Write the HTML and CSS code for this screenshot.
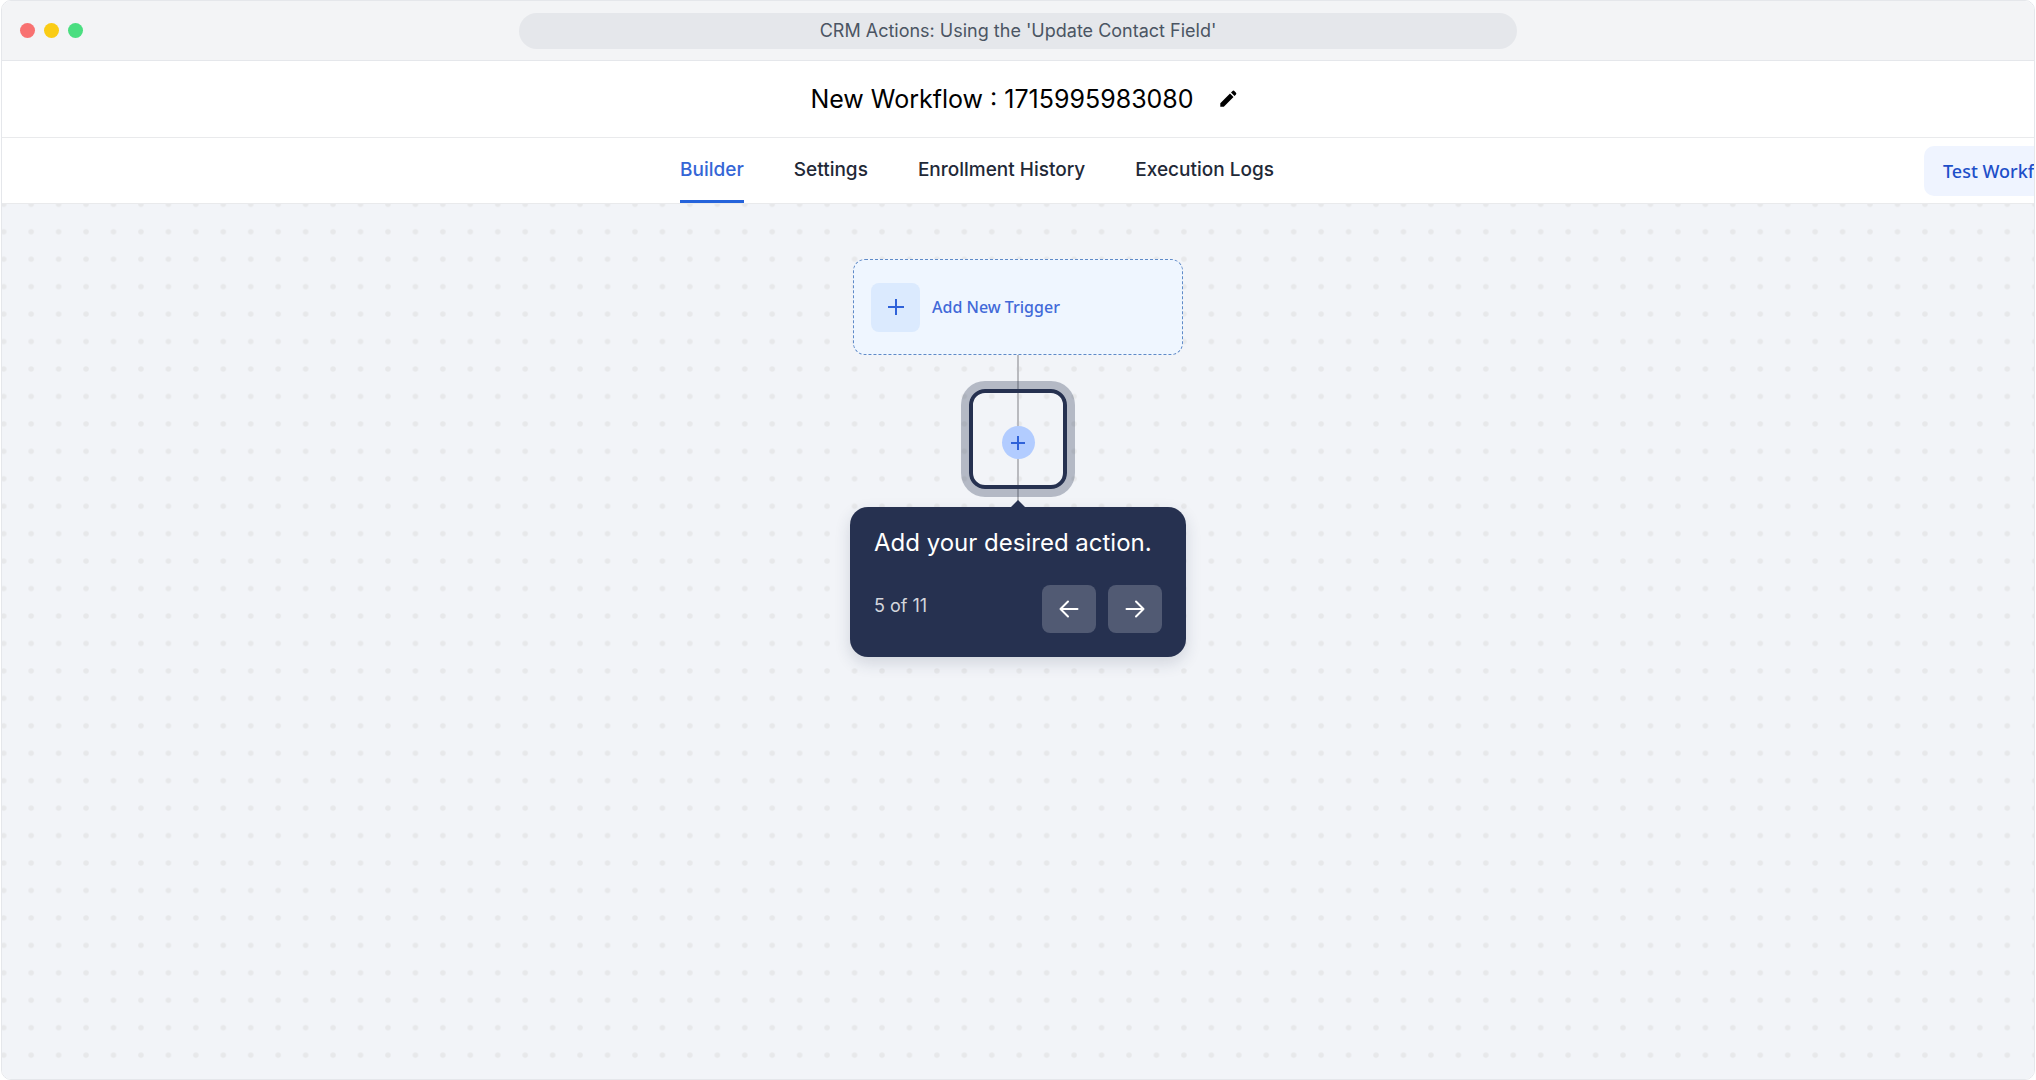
FILE: index.html
```html
<!DOCTYPE html>
<html lang="en">
<head>
  <meta charset="UTF-8">
  <title>CRM Actions: Using the 'Update Contact Field'</title>
  <link rel="stylesheet" href="styles.css">
</head>
<body>
  <div class="window">
    <div class="titlebar">
      <div class="lights">
        <span class="light red"></span>
        <span class="light yellow"></span>
        <span class="light green"></span>
      </div>
      <div class="address">CRM Actions: Using the 'Update Contact Field'</div>
    </div>

    <header class="header">
      <h1>New Workflow : 1715995983080</h1>
      <button class="edit" aria-label="Edit name">
        <svg width="24" height="24" viewBox="0 0 24 24"><path d="M4.3 16.2 14 6.5l3.5 3.5-9.7 9.7H4.3zM15 5.5l1.3-1.3a1.6 1.6 0 0 1 2.3 0l1.2 1.2a1.6 1.6 0 0 1 0 2.3L18.5 9z"/></svg>
      </button>
    </header>

    <div class="toolbar">
      <nav class="tabs">
        <a href="#" class="active">Builder</a>
        <a href="#">Settings</a>
        <a href="#">Enrollment History</a>
        <a href="#">Execution Logs</a>
      </nav>
      <button class="test">Test Workflow</button>
    </div>

    <main class="canvas">
      <svg class="dots" width="100%" height="100%">
        <pattern id="grid" width="20" height="20" patternUnits="userSpaceOnUse" patternTransform="translate(-12 -13.4) scale(1.3723)">
          <circle cx="10" cy="10" r="2" fill="#e7e8ea"/>
        </pattern>
        <rect width="100%" height="100%" fill="url(#grid)"/>
      </svg>

      <div class="flow">
        <button class="trigger">
          <span class="trigger-icon">
            <svg width="18" height="18" viewBox="0 0 18 18"><path d="M9 1v16M1 9h16" stroke="#2f62d9" stroke-width="2"/></svg>
          </span>
          Add New Trigger
        </button>

        <div class="step">
          <div class="spotlight">
            <button class="add" aria-label="Add action">
              <svg width="16" height="16" viewBox="0 0 16 16"><path d="M8 1v14M1 8h14" stroke="#2f62d9" stroke-width="2"/></svg>
            </button>
          </div>
        </div>

        <div class="tooltip">
          <p>Add your desired action.</p>
          <div class="tooltip-footer">
            <span class="count">5 of 11</span>
            <button aria-label="Previous">
              <svg width="24" height="24" viewBox="0 0 24 24"><path d="M20.5 12h-17M11 4.5 3.5 12l7.5 7.5"/></svg>
            </button>
            <button aria-label="Next">
              <svg width="24" height="24" viewBox="0 0 24 24"><path d="M3.5 12h17M13 4.5l7.5 7.5-7.5 7.5"/></svg>
            </button>
          </div>
        </div>
      </div>
    </main>
  </div>
</body>
</html>
```
FILE: styles.css
```css
* {
  box-sizing: border-box;
}
body {
  margin: 0;
  background: #fff;
  font-family: Inter, "Liberation Sans", sans-serif;
}
button {
  border: none;
  padding: 0;
  background: none;
  font: inherit;
  cursor: pointer;
}
svg {
  display: block;
}
.window {
  display: flex;
  flex-direction: column;
  height: 100vh;
  margin: 0 1px;
  border: 1px solid #e5e7eb;
  border-radius: 10px;
  overflow: hidden;
}

.titlebar {
  display: grid;
  grid-template-columns: 1fr 2fr 1fr;
  align-items: center;
  height: 60px;
  padding: 0 18px;
  background: #f3f4f6;
  border-bottom: 1px solid #e5e7eb;
}
.lights {
  display: flex;
  gap: 9px;
}
.light {
  width: 15px;
  height: 15px;
  border-radius: 50%;
}
.red { background: #f87171; }
.yellow { background: #facc15; }
.green { background: #4ade80; }
.address {
  height: 36px;
  border-radius: 18px;
  background: #e5e7eb;
  color: #4b5563;
  font-size: 18px;
  line-height: 36px;
  text-align: center;
}

.header {
  display: flex;
  justify-content: center;
  align-items: center;
  gap: 22px;
  height: 77px;
  padding-left: 14px;
  border-bottom: 1px solid #e9eaec;
}
.header h1 {
  margin: 0;
  font-size: 25px;
  font-weight: 400;
  color: #000;
}

.toolbar {
  position: relative;
  display: flex;
  justify-content: center;
  height: 66px;
  padding-right: 82px;
  border-bottom: 1px solid #e9eaec;
}
.tabs {
  display: flex;
  gap: 50px;
}
.tabs a {
  height: 65px;
  color: #1f2937;
  font-size: 19px;
  font-weight: 500;
  line-height: 64px;
  text-decoration: none;
}
.tabs .active {
  color: #3566d6;
  border-bottom: 3px solid #2563db;
}
/* runs past the right edge of the window */
.test {
  position: absolute;
  top: 8px;
  right: -56px;
  width: 166px;
  height: 50px;
  padding-left: 19px;
  border-radius: 10px;
  background: #eff4ff;
  color: #1d4fc9;
  font-family: "Noto Sans", sans-serif;
  font-size: 18px;
  font-weight: 500;
  text-align: left;
  white-space: nowrap;
}

.canvas {
  position: relative;
  flex: 1;
  padding-top: 55px;
  background: #f2f4f8;
}
.dots {
  position: absolute;
  inset: 0;
}
.flow {
  position: relative;
  display: flex;
  flex-direction: column;
  align-items: center;
}
.trigger {
  display: flex;
  align-items: center;
  gap: 12px;
  width: 330px;
  height: 96px;
  padding: 0 17px;
  border: 1px dashed #5f8ac8;
  border-radius: 12px;
  background: #eff6ff;
  color: #4169d8;
  font-family: "Noto Sans", sans-serif;
  font-size: 16px;
  font-weight: 500;
}
.trigger-icon {
  display: flex;
  align-items: center;
  justify-content: center;
  width: 49px;
  height: 49px;
  border-radius: 8px;
  background: #dbeafe;
}

.step {
  padding: 34px 0 18px;
  background: linear-gradient(#b9babf, #b9babf) center / 2px 100% no-repeat;
}
.spotlight {
  display: flex;
  justify-content: center;
  width: 98px;
  height: 100px;
  padding-top: 33px;
  border: 4px solid #263150;
  border-radius: 16px;
  box-shadow: 0 0 0 8px rgba(38, 49, 80, 0.3);
}
.add {
  display: flex;
  align-items: center;
  justify-content: center;
  width: 33px;
  height: 33px;
  border-radius: 50%;
  background: #b2ccff;
}

.tooltip {
  position: relative;
  width: 336px;
  height: 150px;
  padding: 20px 24px 24px;
  border-radius: 18px;
  background: #263150;
  color: #fff;
  box-shadow: 0 6px 16px rgba(38, 49, 80, 0.16);
}
.tooltip::before {
  content: "";
  position: absolute;
  top: -7px;
  left: 50%;
  margin-left: -7px;
  border: 7px solid transparent;
  border-top: 0;
  border-bottom-color: #263150;
}
.tooltip p {
  margin: 0 0 26px;
  font-size: 24px;
  line-height: 32px;
  white-space: nowrap;
}
.tooltip-footer {
  display: flex;
  gap: 12px;
}
.tooltip-footer button {
  display: flex;
  align-items: center;
  justify-content: center;
  width: 54px;
  height: 48px;
  border-radius: 8px;
  background: #515a73;
}
.tooltip-footer path {
  fill: none;
  stroke: #fff;
  stroke-width: 2;
  stroke-linecap: round;
  stroke-linejoin: round;
}
.count {
  flex: 1;
  color: #d4d6dc;
  font-size: 18px;
  line-height: 42px;
}
```
